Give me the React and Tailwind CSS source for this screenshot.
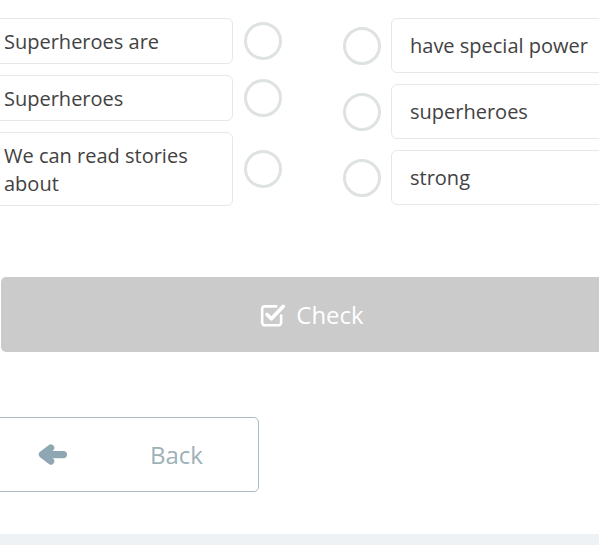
const LEFT = [
  { text: 'Superheroes are' },
  { text: 'Superheroes' },
  { text: 'We can read stories about' },
]

const RIGHT = ['have special power', 'superheroes', 'strong']

function Circle() {
  return <div className="w-[38px] h-[38px] shrink-0 rounded-full border-[3px] border-[#dfe2e2] bg-white" />
}

function CheckSquareIcon() {
  return (
    <svg width="26" height="26" viewBox="0 0 24 24" fill="none" stroke="white" strokeLinecap="round" strokeLinejoin="round">
      <path d="M19.5 12.5v6.5a2.5 2.5 0 0 1-2.5 2.5H4.5A2.5 2.5 0 0 1 2 19V6.5A2.5 2.5 0 0 1 4.5 4H15" strokeWidth="2.4" />
      <polyline points="6.5 11.5 10.5 15.5 21.5 4" strokeWidth="3.4" />
    </svg>
  )
}

function ArrowLeft() {
  return (
    <svg width="29" height="21" viewBox="0 0 28 20" fill="none" stroke="#8fa7b2" strokeLinecap="round" strokeLinejoin="round">
      <line x1="24.5" y1="10" x2="5" y2="10" strokeWidth="7" />
      <polyline points="12.5 3.5 4 10 12.5 16.5" strokeWidth="6.5" />
    </svg>
  )
}

export default function App() {
  return (
    <div className="w-[599px] h-[545px] overflow-hidden bg-white flex flex-col font-['Open_Sans',sans-serif]">
      <div className="w-[660px] ml-[-16px] flex flex-col">
        {/* Matching rows */}
        <div className="flex items-start pt-[18px]">
          <div className="flex flex-col gap-[11px]">
            {LEFT.map((item) => (
              <div key={item.text} className="flex items-center">
                <div className="w-[249px] border border-[#e4e9e7] rounded-[6px] pl-[19px] pr-3 pt-[9px] pb-[7px] text-[20px] leading-[28px] text-[#424242]">
                  {item.text}
                </div>
                <div className="ml-[11px]">
                  <Circle />
                </div>
              </div>
            ))}
          </div>

          <div className="ml-[61px] flex flex-col gap-[11px]">
            {RIGHT.map((t) => (
              <div key={t} className="flex items-center">
                <Circle />
                <div className="ml-[10px] w-[250px] h-[55px] border border-[#e4e9e7] rounded-[6px] pl-[18px] pt-[1px] flex items-center text-[20px] leading-[28px] text-[#424242]">
                  {t}
                </div>
              </div>
            ))}
          </div>
        </div>

        {/* Check button */}
        <div className="mt-[71px] ml-[17px] w-[622px] h-[75px] rounded-[5px] bg-[#cbcbcb] flex items-center justify-center gap-[10px] text-white text-[24px]">
          <CheckSquareIcon />
          <span>Check</span>
        </div>

        {/* Back button */}
        <div className="mt-[65px] w-[275px] h-[75px] rounded-[5px] border border-[#a9bcc5] bg-white flex items-center">
          <div className="ml-[53px]">
            <ArrowLeft />
          </div>
          <span className="ml-[83px] text-[24px] text-[#9eb0b8]">Back</span>
        </div>
      </div>

      <div className="mt-auto h-[11px] bg-[#eef2f4]" />
    </div>
  )
}
